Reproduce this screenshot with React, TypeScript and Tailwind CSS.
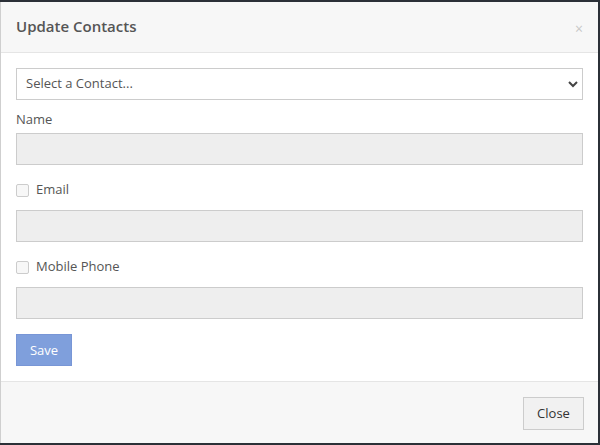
export default function App() {
  return (
    <div className="w-[600px] h-[445px] bg-[#2b3037] pt-[2px] pr-[2px] pb-[2px] font-['Open_Sans',sans-serif] text-[13px] text-[#555]">
      <div className="h-full flex flex-col bg-white border-l border-[#cfcfcf]">
        {/* Header */}
        <div className="h-[51px] shrink-0 flex items-center justify-between pl-[15px] pr-[15px] bg-[#f7f7f7] border-b border-[#e5e5e5]">
          <h3 className="text-[15px] font-semibold text-[#555] leading-none -mt-[2px]">Update Contacts</h3>
          <button className="text-[14px] leading-none text-[#c8c8c8] mt-[3px]">×</button>
        </div>

        {/* Body */}
        <div className="flex-1 px-[15px] pt-[15px] flex flex-col">
          <div className="relative h-[32px] border border-[#cccccc] bg-white flex items-center px-[9px]">
            <span className="text-[#555]">Select a Contact...</span>
            <svg className="absolute right-[4px] top-[11px]" width="10" height="8" viewBox="0 0 10 8">
              <path d="M1 2 L5 6 L9 2" stroke="#444" strokeWidth="2" fill="none" />
            </svg>
          </div>

          <label className="mt-[9px] h-[20px] leading-[20px]">Name</label>
          <div className="mt-[4px] h-[32px] border border-[#cccccc] bg-[#eeeeee]" />

          <div className="mt-[15px] h-[20px] flex items-center gap-[7px]">
            <span className="w-[13px] h-[13px] rounded-[2px] border border-[#cccccc] bg-[#f7f7f7]" />
            <span>Email</span>
          </div>
          <div className="mt-[10px] h-[32px] border border-[#cccccc] bg-[#eeeeee]" />

          <div className="mt-[15px] h-[20px] flex items-center gap-[7px]">
            <span className="w-[13px] h-[13px] rounded-[2px] border border-[#cccccc] bg-[#f7f7f7]" />
            <span>Mobile Phone</span>
          </div>
          <div className="mt-[10px] h-[32px] border border-[#cccccc] bg-[#eeeeee]" />

          <button className="mt-[15px] self-start w-[56px] h-[32px] pt-[2px] bg-[#7f9fdc] border border-[#7896d6] text-white text-[13px]">
            Save
          </button>
        </div>

        {/* Footer */}
        <div className="h-[62px] shrink-0 flex items-center justify-end pr-[14px] bg-[#f7f7f7] border-t border-[#e5e5e5]">
          <button className="w-[61px] h-[33px] mt-[2px] bg-[#f1f1f1] border border-[#cccccc] text-[#333] text-[13px]">
            Close
          </button>
        </div>
      </div>
    </div>
  );
}
